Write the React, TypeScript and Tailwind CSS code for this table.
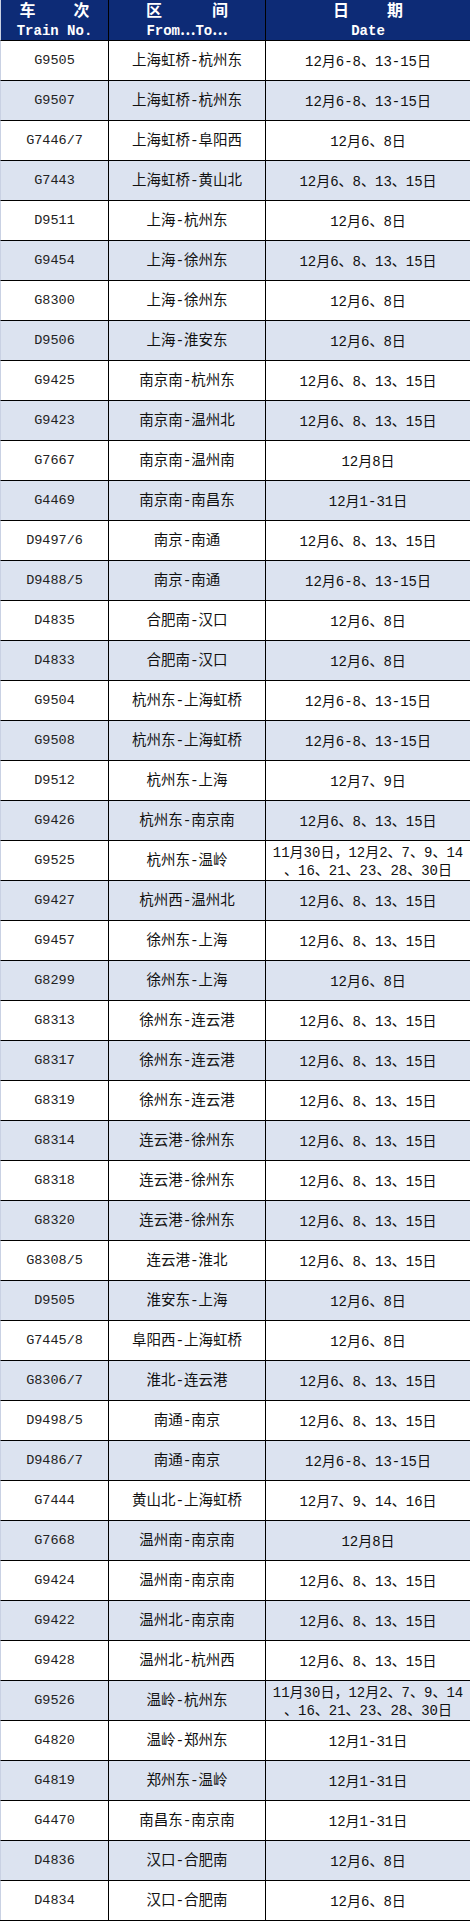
import React from 'react'

const MULTI = ['11月30日，12月2、7、9、14', '、16、21、23、28、30日']

const rows: [string, string, string | string[]][] = [
  ['G9505', '上海虹桥-杭州东', '12月6-8、13-15日'],
  ['G9507', '上海虹桥-杭州东', '12月6-8、13-15日'],
  ['G7446/7', '上海虹桥-阜阳西', '12月6、8日'],
  ['G7443', '上海虹桥-黄山北', '12月6、8、13、15日'],
  ['D9511', '上海-杭州东', '12月6、8日'],
  ['G9454', '上海-徐州东', '12月6、8、13、15日'],
  ['G8300', '上海-徐州东', '12月6、8日'],
  ['D9506', '上海-淮安东', '12月6、8日'],
  ['G9425', '南京南-杭州东', '12月6、8、13、15日'],
  ['G9423', '南京南-温州北', '12月6、8、13、15日'],
  ['G7667', '南京南-温州南', '12月8日'],
  ['G4469', '南京南-南昌东', '12月1-31日'],
  ['D9497/6', '南京-南通', '12月6、8、13、15日'],
  ['D9488/5', '南京-南通', '12月6-8、13-15日'],
  ['D4835', '合肥南-汉口', '12月6、8日'],
  ['D4833', '合肥南-汉口', '12月6、8日'],
  ['G9504', '杭州东-上海虹桥', '12月6-8、13-15日'],
  ['G9508', '杭州东-上海虹桥', '12月6-8、13-15日'],
  ['D9512', '杭州东-上海', '12月7、9日'],
  ['G9426', '杭州东-南京南', '12月6、8、13、15日'],
  ['G9525', '杭州东-温岭', MULTI],
  ['G9427', '杭州西-温州北', '12月6、8、13、15日'],
  ['G9457', '徐州东-上海', '12月6、8、13、15日'],
  ['G8299', '徐州东-上海', '12月6、8日'],
  ['G8313', '徐州东-连云港', '12月6、8、13、15日'],
  ['G8317', '徐州东-连云港', '12月6、8、13、15日'],
  ['G8319', '徐州东-连云港', '12月6、8、13、15日'],
  ['G8314', '连云港-徐州东', '12月6、8、13、15日'],
  ['G8318', '连云港-徐州东', '12月6、8、13、15日'],
  ['G8320', '连云港-徐州东', '12月6、8、13、15日'],
  ['G8308/5', '连云港-淮北', '12月6、8、13、15日'],
  ['D9505', '淮安东-上海', '12月6、8日'],
  ['G7445/8', '阜阳西-上海虹桥', '12月6、8日'],
  ['G8306/7', '淮北-连云港', '12月6、8、13、15日'],
  ['D9498/5', '南通-南京', '12月6、8、13、15日'],
  ['D9486/7', '南通-南京', '12月6-8、13-15日'],
  ['G7444', '黄山北-上海虹桥', '12月7、9、14、16日'],
  ['G7668', '温州南-南京南', '12月8日'],
  ['G9424', '温州南-南京南', '12月6、8、13、15日'],
  ['G9422', '温州北-南京南', '12月6、8、13、15日'],
  ['G9428', '温州北-杭州西', '12月6、8、13、15日'],
  ['G9526', '温岭-杭州东', MULTI],
  ['G4820', '温岭-郑州东', '12月1-31日'],
  ['G4819', '郑州东-温岭', '12月1-31日'],
  ['G4470', '南昌东-南京南', '12月1-31日'],
  ['D4836', '汉口-合肥南', '12月6、8日'],
  ['D4834', '汉口-合肥南', '12月6、8日'],
]

const font = { fontFamily: '"Liberation Mono", "Noto Sans CJK SC", monospace' }

export default function App() {
  return (
    <div className="w-[470px] bg-white text-black" style={font}>
      {/* header */}
      <div className="grid grid-cols-[108px_157px_205px] h-[40px] bg-[#0d2b76] text-white font-bold border-l border-[#c9d1e3]">
        <div className="flex flex-col items-center pt-[3px] border-r border-black">
          <span className="flex justify-between w-[70px] text-[16px] leading-[19px]">
            <span>车</span>
            <span>次</span>
          </span>
          <span className="text-[14px] leading-[19px]">Train No.</span>
        </div>
        <div className="flex flex-col items-center pt-[3px] border-r border-black">
          <span className="flex justify-between w-[82px] text-[16px] leading-[19px]">
            <span>区</span>
            <span>间</span>
          </span>
          <span className="text-[14px] leading-[19px]">From⋯To⋯</span>
        </div>
        <div className="flex flex-col items-center pt-[3px] border-r border-black">
          <span className="flex justify-between w-[70px] text-[16px] leading-[19px]">
            <span>日</span>
            <span>期</span>
          </span>
          <span className="text-[14px] leading-[19px]">Date</span>
        </div>
      </div>

      {/* rows */}
      <div className="border-b border-black">
        {rows.map(([no, route, date], i) => (
          <div
            key={i}
            className={`grid grid-cols-[108px_157px_205px] h-[40px] border-t border-black border-l border-l-[#c9d1e3] ${
              i % 2 === 1 ? 'bg-[#dce3f0]' : 'bg-white'
            }`}
          >
            <div className="flex items-center justify-center pt-[2px] border-r border-black text-[13.5px] text-[#222]">
              {no}
            </div>
            <div className="flex items-center justify-center pt-[2px] border-r border-black text-[14.5px] text-[#111]">
              {route}
            </div>
            <div className="flex flex-col items-center justify-center pt-[2px] border-r border-black text-[14px] text-[#111] leading-[18px]">
              {Array.isArray(date) ? date.map((l, k) => <span key={k} className="whitespace-nowrap">{l}</span>) : date}
            </div>
          </div>
        ))}
      </div>
    </div>
  )
}
